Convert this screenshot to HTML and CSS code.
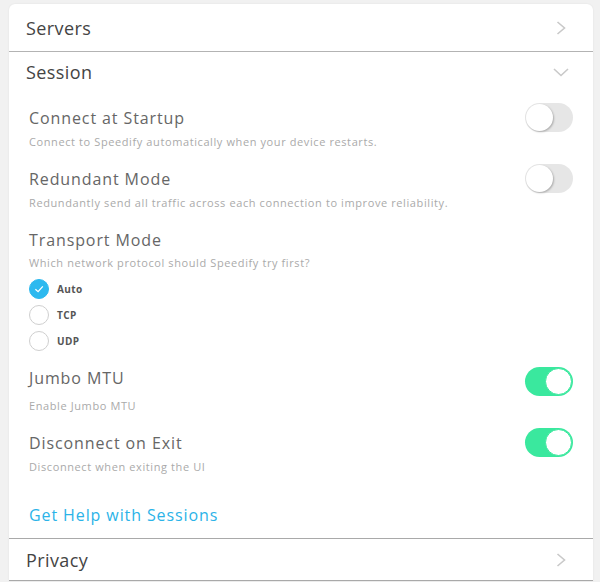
FILE: index.html
```html
<!DOCTYPE html>
<html>
<head>
<meta charset="utf-8">
<link rel="stylesheet" href="styles.css">
</head>
<body>
<div class="card">
  <div class="header header-servers">
    <span>Servers</span>
    <svg class="chev chev-right" width="10" height="14" viewBox="0 0 10 14"><path d="M1.5 1 L8.5 7 L1.5 13" fill="none" stroke="#c9c9c9" stroke-width="1.6"/></svg>
  </div>
  <div class="header header-session">
    <span>Session</span>
    <svg class="chev chev-down" width="16" height="9" viewBox="0 0 16 9"><path d="M1 1 L8 7.5 L15 1" fill="none" stroke="#c9c9c9" stroke-width="1.6"/></svg>
  </div>
  <div class="body">
    <div class="setting">
      <div class="row"><span class="title">Connect at Startup</span><span class="toggle"><span class="knob"></span></span></div>
      <div class="desc">Connect to Speedify automatically when your device restarts.</div>
    </div>
    <div class="setting">
      <div class="row"><span class="title">Redundant Mode</span><span class="toggle"><span class="knob"></span></span></div>
      <div class="desc">Redundantly send all traffic across each connection to improve reliability.</div>
    </div>
    <div class="setting s-transport">
      <div class="row"><span class="title">Transport Mode</span></div>
      <div class="desc">Which network protocol should Speedify try first?</div>
      <div class="radios">
        <div class="radio checked"><span class="dot"><svg width="20" height="20" viewBox="0 0 20 20"><path d="M6 10.2 L9 13 L14.2 7" fill="none" stroke="#fff" stroke-width="1.4"/></svg></span><span class="rlabel">Auto</span></div>
        <div class="radio"><span class="dot"></span><span class="rlabel">TCP</span></div>
        <div class="radio"><span class="dot"></span><span class="rlabel">UDP</span></div>
      </div>
    </div>
    <div class="setting">
      <div class="row"><span class="title title-up">Jumbo MTU</span><span class="toggle on"><span class="knob"></span></span></div>
      <div class="desc">Enable Jumbo MTU</div>
    </div>
    <div class="setting">
      <div class="row"><span class="title">Disconnect on Exit</span><span class="toggle on"><span class="knob"></span></span></div>
      <div class="desc">Disconnect when exiting the UI</div>
    </div>
    <a class="help">Get Help with Sessions</a>
  </div>
  <div class="header header-privacy">
    <span>Privacy</span>
    <svg class="chev chev-right" width="10" height="14" viewBox="0 0 10 14"><path d="M1.5 1 L8.5 7 L1.5 13" fill="none" stroke="#c9c9c9" stroke-width="1.6"/></svg>
  </div>
</div>
</body>
</html>
```
FILE: styles.css
```css
html, body {
  margin: 0;
  padding: 0;
  background: #f1f1f1;
  font-family: "Open Sans", "Liberation Sans", sans-serif;
}
body {
  padding: 4px 7px 0 9px;
  height: 582px;
  box-sizing: border-box;
  overflow: hidden;
}
.card {
  background: #fff;
  border-radius: 6px 6px 0 0;
  box-shadow: 0 0 2px rgba(0,0,0,0.08);
  width: 584px;
}
.header {
  display: flex;
  align-items: center;
  justify-content: space-between;
  padding: 0 27px 0 17px;
  font-size: 18px;
  color: #444;
  letter-spacing: 0.4px;
}
.chev-down {
  margin-right: -3px;
}
.header-servers {
  height: 47px;
  border-bottom: 1px solid #b3b3b3;
}
.header-session {
  height: 40px;
}
.header-privacy {
  height: 41px;
  border-top: 1px solid #a9a9a9;
  border-bottom: 1px solid #a9a9a9;
}
.body {
  padding: 11px 20px 13px 20px;
}
.setting {
  margin-bottom: 14px;
}
.row {
  display: flex;
  align-items: center;
  justify-content: space-between;
  height: 29px;
}
.title {
  font-size: 16px;
  color: #666;
  letter-spacing: 0.9px;
}
.title-up {
  position: relative;
  top: -4px;
}
.desc {
  font-size: 11px;
  color: #aaa;
  line-height: 16px;
  margin-top: 2px;
  letter-spacing: 0.6px;
}
.s-transport .desc {
  margin-top: 1px;
}
.s-transport {
  margin-bottom: 16px;
}
.toggle {
  width: 48px;
  height: 29px;
  border-radius: 15px;
  background: #e6e6e6;
  position: relative;
  box-sizing: border-box;
}
.toggle .knob {
  position: absolute;
  left: 1px;
  top: 1px;
  width: 27px;
  height: 27px;
  border-radius: 50%;
  background: #fff;
  box-shadow: 1px 1px 2px rgba(0,0,0,0.25);
  box-sizing: border-box;
}
.toggle.on {
  background: #3ae89e;
}
.toggle.on .knob {
  left: 20px;
  box-shadow: none;
  border: 1.5px solid #3ae89e;
}
.radios {
  margin-top: 8px;
  display: flex;
  flex-direction: column;
  gap: 6px;
}
.radio {
  display: flex;
  align-items: center;
  height: 20px;
}
.dot {
  width: 20px;
  height: 20px;
  border-radius: 50%;
  border: 1px solid #cfcfcf;
  box-sizing: border-box;
  margin-right: 8px;
  display: flex;
  align-items: center;
  justify-content: center;
}
.radio.checked .dot {
  background: #2db9ef;
  border-color: #2db9ef;
}
.rlabel {
  font-size: 10px;
  font-weight: 700;
  color: #555;
  letter-spacing: 0.4px;
}
.help {
  display: block;
  margin-top: 30px;
  font-size: 16px;
  line-height: 20px;
  color: #2bb3e8;
  letter-spacing: 0.9px;
}
```
